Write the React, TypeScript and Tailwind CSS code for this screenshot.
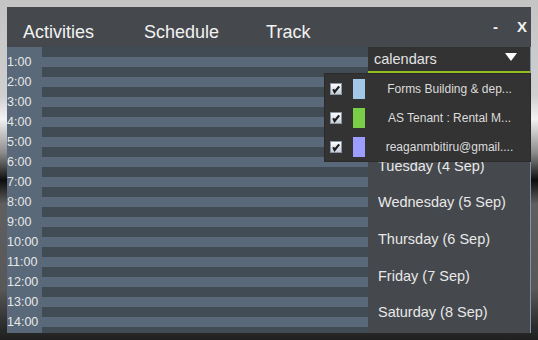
const hours = Array.from({ length: 15 }, (_, i) => (i < 14 ? `${i + 1}:00` : ""));

const days = [
  "Sunday (2 Sep)",
  "Monday (3 Sep)",
  "Tuesday (4 Sep)",
  "Wednesday (5 Sep)",
  "Thursday (6 Sep)",
  "Friday (7 Sep)",
  "Saturday (8 Sep)",
];

const calendars = [
  { name: "Forms Building & dep...", color: "bg-[#a3c7e7]" },
  { name: "AS Tenant : Rental M...", color: "bg-[#79cf47]" },
  { name: "reaganmbitiru@gmail....", color: "bg-[#9d9cff]" },
];

function CheckBox() {
  return (
    <svg width="12" height="12" viewBox="0 0 12 12" className="shrink-0">
      <defs>
        <linearGradient id="cbFill" x1="0" y1="0" x2="0" y2="1">
          <stop offset="0" stopColor="#ffffff" />
          <stop offset="1" stopColor="#c3ccd6" />
        </linearGradient>
      </defs>
      <rect x="0.5" y="0.5" width="11" height="11" fill="url(#cbFill)" stroke="#8b97a5" />
      <path d="M3.2 6.3 L4.6 9 L9.2 3.4" stroke="#1b1b1b" strokeWidth="2.1" fill="none" />
    </svg>
  );
}

function CalendarPopup() {
  return (
    <div className="absolute top-[26px] right-[-1px] w-[207px] border border-[#2b2b2b] bg-[#333333]">
      {calendars.map((cal) => (
        <div key={cal.name} className="flex h-[29px] items-center pl-[5px]">
          <CheckBox />
          <div className={`ml-[11px] h-[20px] w-[12px] shrink-0 ${cal.color}`} />
          <span className="ml-[4px] flex-1 text-center text-[12px] text-[#dcdcdc] whitespace-nowrap">
            {cal.name}
          </span>
        </div>
      ))}
    </div>
  );
}

export default function App() {
  return (
    <div
      className="h-[340px] w-[538px] p-[7px] bg-[linear-gradient(to_bottom,#c4c4c4_0%,#cfcfcf_28%,#f2f2f2_35%,#8a8a8a_45%,#0d0d0d_53%,#5f5f5f_60%,#585858_85%,#2c2c2c_96%,#202020_100%)]"
      style={{ fontFamily: '"Liberation Sans", Arial, sans-serif' }}
    >
      <div className="flex h-full flex-col overflow-hidden bg-[#45484d]">
        {/* top bar */}
        <div className="flex h-[40px] shrink-0 items-start pt-[16px] text-[18px] leading-[18px] text-[#f2f2f2]">
          <span className="ml-[16px]">Activities</span>
          <span className="ml-[50px]">Schedule</span>
          <span className="ml-[47px]">Track</span>
          <span className="ml-auto -mt-[4px] text-[15px] leading-[15px] font-bold">-</span>
          <span className="ml-[19px] mr-[4px] -mt-[4px] text-[15px] leading-[15px] font-bold">X</span>
        </div>

        <div className="flex min-h-0 flex-1">
          {/* hours grid */}
          <div className="flex w-[361px] flex-col overflow-hidden">
            {hours.map((h, i) => (
              <div key={i} className="flex h-[20px] shrink-0">
                <div className="w-[35px] bg-[#596979] pt-[10px] text-[12.5px] leading-[10px] text-[#e8e8e8]">
                  {h}
                </div>
                <div className="flex flex-1 flex-col">
                  <div className="h-[10px] bg-[#414b54]" />
                  <div className="h-[10px] bg-[#596979]" />
                </div>
              </div>
            ))}
          </div>

          {/* side panel */}
          <div className="relative w-[163px] border-r border-[#7e94a9]">
            <div className="flex h-[26px] items-start border-b-2 border-[#92bf1e] bg-[#333333] pl-[6px] pr-[13px]">
              <span className="mt-[3px] text-[14.5px] leading-[18px] text-[#e4e4e4]">calendars</span>
              <svg width="12" height="8" viewBox="0 0 12 8" className="ml-auto mt-[6px]">
                <path d="M0 0 H12 L6 8 Z" fill="#ffffff" />
              </svg>
            </div>
            <div className="flex flex-col pt-[2px]">
              {days.map((d) => (
                <div key={d} className="flex h-[36.67px] items-center pl-[10px] text-[14.5px] text-[#e8e8e8]">
                  {d}
                </div>
              ))}
            </div>
            <CalendarPopup />
          </div>
        </div>
      </div>
    </div>
  );
}
